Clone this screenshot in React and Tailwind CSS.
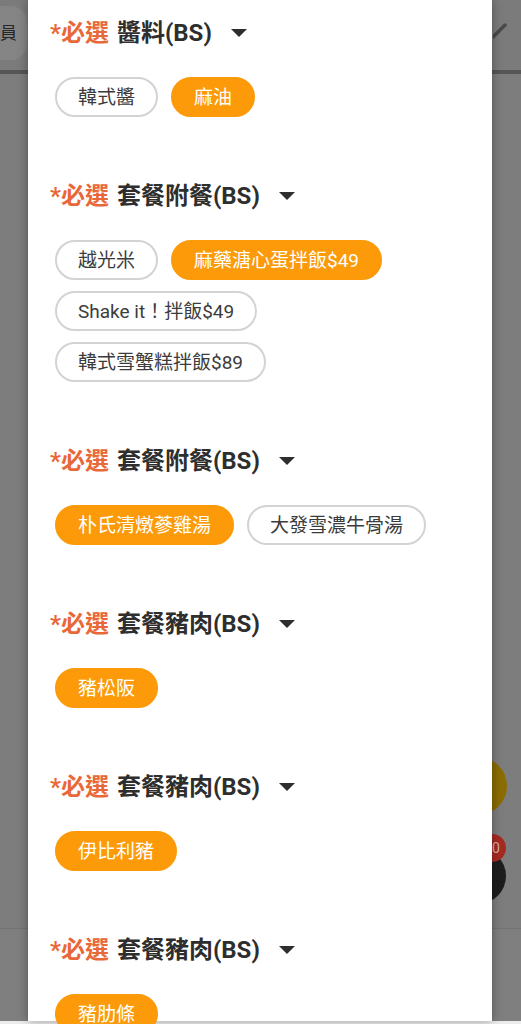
const sections = [
  { title: "醬料(BS)", options: [["韓式醬", false], ["麻油", true]] },
  {
    title: "套餐附餐(BS)",
    options: [
      ["越光米", false],
      ["麻藥溏心蛋拌飯$49", true],
      ["Shake it！拌飯$49", false],
      ["韓式雪蟹糕拌飯$89", false],
    ],
  },
  { title: "套餐附餐(BS)", options: [["朴氏清燉蔘雞湯", true], ["大發雪濃牛骨湯", false]] },
  { title: "套餐豬肉(BS)", options: [["豬松阪", true]] },
  { title: "套餐豬肉(BS)", options: [["伊比利豬", true]] },
  { title: "套餐豬肉(BS)", options: [["豬肋條", true]] },
];

const chipBase =
  "h-10 px-[21px] rounded-full border-2 flex items-center text-[19px] leading-none whitespace-nowrap";

function Chip({ label, active }) {
  return (
    <div
      className={
        active
          ? `${chipBase} bg-[#fc9a0a] border-[#fc9a0a] text-white`
          : `${chipBase} bg-white border-[#d3d3d3] text-[#3c3c3c]`
      }
    >
      {label}
    </div>
  );
}

function Section({ title, options, first }) {
  return (
    <div className={first ? "" : "mt-[63px]"}>
      <div className="h-8 pl-[22px] flex items-center text-[24px] font-bold leading-none">
        <span className="text-[#e8683a]">*必選</span>
        <span className="ml-[8px] text-[#2e2e2e]">{title}</span>
        <svg width="16" height="8" viewBox="0 0 16 8" className="ml-[19px]">
          <polygon points="0,0 16,0 8,8" fill="#2e2e2e" />
        </svg>
      </div>
      <div className="mt-[28px] pl-[27px] pr-[40px] flex flex-wrap gap-x-[13px] gap-y-[11px]">
        {options.map(([label, active]) => (
          <Chip key={label} label={label} active={active} />
        ))}
      </div>
    </div>
  );
}

export default function App() {
  return (
    <div
      className="relative h-[1024px] w-full overflow-hidden bg-[#7b7b7b] flex flex-col"
      style={{ fontFamily: 'Roboto, "Noto Sans CJK TC", sans-serif' }}
    >
      {/* page behind the overlay */}
      <div className="h-[70px] flex justify-between items-start bg-[#7b7b7b]">
        <div className="mt-[6px] h-[54px] w-[27px] rounded-r-[16px] bg-[#858585] flex items-center">
          <span className="text-[17px] leading-none text-[#262626]">員</span>
        </div>
        <svg width="28" height="28" viewBox="0 0 28 28" className="mt-[16px]">
          <line x1="0" y1="21" x2="12" y2="9" stroke="#4a4a4a" strokeWidth="3.5" strokeLinecap="round" />
        </svg>
      </div>
      <div className="h-[4px] bg-[#565656]" />
      <div className="flex-1 bg-[#7d7d7d]" />
      <div className="h-[93px] border-t border-[#727272] bg-[#7f7f7f]" />
      <div className="h-[3px] bg-[#ececec]" />

      {/* floating buttons */}
      <div className="absolute left-[449px] top-[757px] h-[58px] w-[58px] rounded-full bg-[#8a6c00]" />
      <div className="absolute left-[450px] top-[848px] h-[56px] w-[56px] rounded-full bg-[#1d1d1d]" />
      <div className="absolute left-[478px] top-[834px] h-[28px] w-[28px] rounded-full bg-[#a52b22] flex items-center justify-center text-[14px] text-[#d9b0ac]">
        10
      </div>

      {/* options sheet */}
      <div className="absolute left-[28px] top-0 h-[1021px] w-[464px] bg-white pt-[17px] shadow-[0_0_10px_rgba(0,0,0,0.35)]">
        {sections.map((s, i) => (
          <Section key={i} title={s.title} options={s.options} first={i === 0} />
        ))}
      </div>
    </div>
  );
}
